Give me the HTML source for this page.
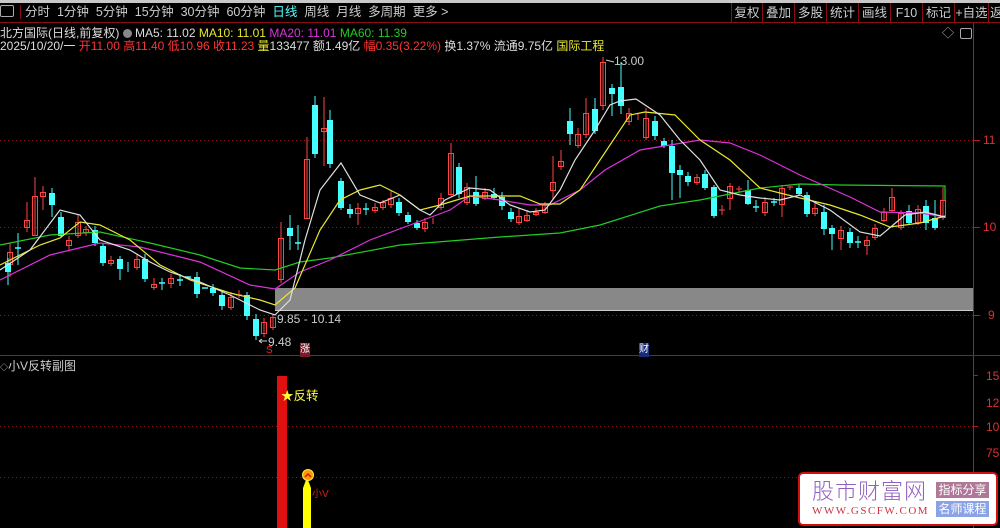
<!DOCTYPE html>
<html><head><meta charset="utf-8"><style>
body{margin:0;width:1000px;height:528px;background:#000;overflow:hidden;font-family:"Liberation Sans","Noto Sans CJK SC",sans-serif;position:relative}
.t{position:absolute;white-space:nowrap;font-size:12px;line-height:14px}
.b{position:absolute;top:6px;color:#ccc;font-size:12.5px;line-height:14px;text-align:center;white-space:nowrap}
</style></head><body>
<div style="position:absolute;left:0;top:0;width:1000px;height:3px;background:#c8c8c8"></div>
<div style="position:absolute;left:0;top:22px;width:1000px;height:1px;background:#8a0e14"></div>
<div class="t" style="left:0;top:5px;color:#ccc;font-size:12.5px;word-spacing:0">
<span style="display:inline-block;width:12px;height:10px;border:1px solid #aaa;border-radius:2px;vertical-align:-1px;margin-right:6px"></span><span style="border-left:1px solid #8a0e14;padding-left:4px">分时</span>&nbsp; 1分钟&nbsp; 5分钟&nbsp; 15分钟&nbsp; 30分钟&nbsp; 60分钟&nbsp; <span style="color:#5ff">日线</span>&nbsp; 周线&nbsp; 月线&nbsp; 多周期&nbsp; 更多 &gt;</div>
<div class="b" style="left:732px;width:30px">复权</div>
<div class="b" style="left:763px;width:31px">叠加</div>
<div class="b" style="left:795px;width:31px">多股</div>
<div class="b" style="left:827px;width:31px">统计</div>
<div class="b" style="left:859px;width:31px">画线</div>
<div class="b" style="left:891px;width:31px">F10</div>
<div class="b" style="left:923px;width:31px">标记</div>
<div class="b" style="left:955px;width:33px">+自选</div>
<div class="b" style="left:990px;width:20px;text-align:left">返</div>
<svg style="position:absolute;left:0;top:0" width="1000" height="528">
<g stroke="#8a0e14" stroke-width="1">
<line x1="731.5" y1="3" x2="731.5" y2="22"/><line x1="762.5" y1="3" x2="762.5" y2="22"/><line x1="794.5" y1="3" x2="794.5" y2="22"/><line x1="826.5" y1="3" x2="826.5" y2="22"/><line x1="858.5" y1="3" x2="858.5" y2="22"/><line x1="890.5" y1="3" x2="890.5" y2="22"/><line x1="922.5" y1="3" x2="922.5" y2="22"/><line x1="954.5" y1="3" x2="954.5" y2="22"/><line x1="988.5" y1="3" x2="988.5" y2="22"/>
</g>
<line x1="973.5" y1="23" x2="973.5" y2="528" stroke="#c0141c"/>
<line x1="0" y1="355.5" x2="1000" y2="355.5" stroke="#a0141c"/>
<g stroke="#8a1a1a" stroke-dasharray="1,3">
<line x1="0" y1="140.5" x2="973" y2="140.5"/><line x1="0" y1="227.5" x2="973" y2="227.5"/><line x1="0" y1="315.5" x2="973" y2="315.5"/>
<line x1="0" y1="426.5" x2="973" y2="426.5"/><line x1="0" y1="477.5" x2="973" y2="477.5"/>
</g>
<g stroke="#c0141c"><line x1="973" y1="140.5" x2="980" y2="140.5"/><line x1="973" y1="227.5" x2="980" y2="227.5"/><line x1="973" y1="315.5" x2="980" y2="315.5"/><line x1="973" y1="375.5" x2="978" y2="375.5"/><line x1="973" y1="426.5" x2="978" y2="426.5"/></g>
<rect x="275" y="288" width="698" height="22" fill="#888"/>
<line x1="275" y1="310.5" x2="973" y2="310.5" stroke="#ccc"/>
<g>
<g stroke="#ff4444" fill="none">
<path d="M10 243V277M27 202V232M35 177V235M43 186V210M69 236V250M78 214V238M86 226V236M111 256V266M137 254V270M154 278V290M171 274V288M231 292V310M239 290V298M264 318V337M273 314V330M281 222V283M307 137V218M324 97V166M358 203V225M375 203V213M383 200V210M391 190V208M425 218V232M433 218V224M441 193V210M451 143V196M467 183V205M485 188V200M519 208V225M527 210V222M536 208V216M545 202V214M553 156V200M561 150V170M578 128V148M586 98V138M603 57V110M629 108V125M638 113V120M646 108V140M697 174V185M722 205V215M730 183V210M739 186V192M765 197V216M782 185V217M790 186V190M815 203V216M841 226V250M867 236V255M875 224V240M884 208V222M892 188V212M901 210V230M918 205V225M943 187V220"/>
<path d="M7.5 252.5h5v12h-5zM24.5 220.5h5v7h-5zM32.5 196.5h5v39h-5zM40.5 192.5h5v4h-5zM66.5 240.5h5v5h-5zM75.5 222.5h5v13h-5zM83.5 229.5h5v3h-5zM108.5 260.5h5v3h-5zM134.5 259.5h5v8h-5zM151.5 284.5h5v3h-5zM168.5 278.5h5v5h-5zM228.5 297.5h5v10h-5zM261.5 322.5h5v11h-5zM270.5 317.5h5v10h-5zM278.5 238.5h5v41h-5zM304.5 159.5h5v59h-5zM321.5 128.5h5v3h-5zM355.5 208.5h5v5h-5zM372.5 207.5h5v3h-5zM380.5 202.5h5v5h-5zM388.5 198.5h5v6h-5zM422.5 222.5h5v6h-5zM438.5 198.5h5v9h-5zM448.5 153.5h5v41h-5zM464.5 187.5h5v15h-5zM482.5 192.5h5v6h-5zM516.5 216.5h5v6h-5zM524.5 215.5h5v5h-5zM533.5 212.5h5v2h-5zM542.5 205.5h5v7h-5zM550.5 182.5h5v8h-5zM558.5 161.5h5v5h-5zM575.5 134.5h5v11h-5zM583.5 113.5h5v21h-5zM600.5 62.5h5v43h-5zM626.5 113.5h5v8h-5zM643.5 118.5h5v19h-5zM694.5 177.5h5v5h-5zM727.5 186.5h5v12h-5zM762.5 202.5h5v10h-5zM779.5 188.5h5v16h-5zM812.5 208.5h5v5h-5zM838.5 230.5h5v8h-5zM864.5 240.5h5v5h-5zM872.5 228.5h5v9h-5zM881.5 212.5h5v8h-5zM889.5 197.5h5v13h-5zM898.5 213.5h5v14h-5zM915.5 209.5h5v13h-5zM940.5 200.5h5v17h-5z"/>
<path d="M719 210h6M236 295h6M736 189h6M787 187h6"/>
</g>
<g stroke="#44ffff" fill="#44ffff">
<path d="M8 258V285M18 233V265M52 188V217M61 212V238M95 226V246M103 244V266M120 256V280M128 262V272M145 254V282M162 278V290M180 274V286M197 272V298M213 284V296M222 290V310M247 292V320M256 314V340M290 215V250M298 225V250M315 96V158M330 110V168M341 178V210M350 204V218M366 203V215M399 198V216M408 212V224M417 220V230M459 163V198M476 176V206M494 188V200M502 192V210M511 208V222M570 108V145M595 98V134M612 84V116M621 62V114M655 116V140M664 138V148M672 140V200M680 165V198M688 172V186M705 170V190M714 185V218M748 180V205M756 200V212M774 198V206M799 184V196M807 192V217M824 205V235M832 225V250M850 228V248M858 236V248M909 205V225M926 200V230M935 200V230"/>
<path d="M5.5 263.5h5v8h-5zM49.5 193.5h5v11h-5zM58.5 217.5h5v18h-5zM92.5 230.5h5v12h-5zM100.5 246.5h5v16h-5zM117.5 259.5h5v9h-5zM142.5 259.5h5v19h-5zM194.5 277.5h5v16h-5zM210.5 288.5h5v4h-5zM219.5 295.5h5v10h-5zM244.5 295.5h5v20h-5zM253.5 319.5h5v16h-5zM287.5 228.5h5v7h-5zM312.5 105.5h5v48h-5zM327.5 120.5h5v43h-5zM338.5 181.5h5v26h-5zM347.5 209.5h5v4h-5zM396.5 202.5h5v10h-5zM405.5 215.5h5v6h-5zM414.5 223.5h5v4h-5zM456.5 167.5h5v26h-5zM473.5 192.5h5v11h-5zM491.5 194.5h5v3h-5zM499.5 197.5h5v8h-5zM508.5 212.5h5v6h-5zM567.5 121.5h5v12h-5zM592.5 109.5h5v21h-5zM609.5 88.5h5v5h-5zM618.5 87.5h5v18h-5zM652.5 121.5h5v14h-5zM661.5 141.5h5v4h-5zM669.5 146.5h5v26h-5zM677.5 170.5h5v4h-5zM685.5 176.5h5v5h-5zM702.5 174.5h5v13h-5zM711.5 187.5h5v28h-5zM745.5 190.5h5v13h-5zM796.5 188.5h5v5h-5zM804.5 195.5h5v18h-5zM821.5 212.5h5v16h-5zM829.5 228.5h5v5h-5zM847.5 232.5h5v10h-5zM906.5 211.5h5v11h-5zM923.5 206.5h5v16h-5zM932.5 218.5h5v9h-5z"/>
<path d="M15 248h6M159 283h6M177 280h6M185 277h6M202 288h6M295 243h6M363 209h6M753 207h6M771 202h6M855 242h6" stroke-width="1.5"/>
</g>
</g>
<g fill="none" stroke-width="1.2">
<polyline stroke="#22cc22" points="0,245 50,235 100,232 150,243 200,255 240,268 275,270 300,262 330,258 400,245 500,237 560,233 600,225 660,206 700,200 760,188 800,184 840,185 945,186 945,200"/>
<polyline stroke="#dd33dd" points="0,280 50,255 100,243 140,247 200,262 250,285 275,289 300,272 330,260 370,240 410,225 450,210 470,196 500,200 530,205 550,205 580,190 605,170 640,150 700,140 730,143 760,155 800,175 850,197 880,212 920,213 945,217"/>
<polyline stroke="#e8e830" points="0,265 40,245 60,238 80,222 100,225 130,240 160,265 190,280 230,293 260,300 275,305 295,288 320,230 340,200 360,190 380,185 400,195 420,210 440,205 470,196 490,196 520,196 540,204 560,204 580,190 600,160 630,115 645,112 675,115 700,140 730,160 760,188 800,198 830,205 860,215 890,227 920,223 945,216"/>
<polyline stroke="#e0e0e0" points="0,270 30,250 60,210 80,215 100,240 130,250 150,262 170,272 200,282 230,295 260,310 275,315 290,300 305,240 320,190 341,163 360,195 380,203 400,195 420,210 430,215 445,200 470,188 490,190 510,205 530,212 545,210 560,190 575,160 595,130 610,105 620,101 636,99 660,115 680,140 700,160 720,190 740,195 760,198 780,200 800,195 830,210 860,232 880,236 905,215 925,212 945,217"/>
</g>
<path d="M259 341h8M259 341l3-2M259 341l3 2M606 60l8 2" stroke="#ccc" fill="none"/>
<rect x="277" y="376" width="10" height="152" fill="#e01010"/>
<path d="M303 528V488l3-8v-8h2v8l3 8v40z" fill="#ffff00"/>
<circle cx="308" cy="475" r="5.5" fill="#ff9900" stroke="#ffee44"/>
<path d="M305 477l3-3 3 3" stroke="#cc2200" fill="none" stroke-width="1.5"/>
</svg>
<div class="t" style="left:0;top:26px;color:#ddd">北方国际(日线,前复权) <span style="display:inline-block;width:9px;height:9px;border-radius:50%;background:#888;vertical-align:-1px"></span> MA5: 11.02 <span style="color:#e8e830">MA10: 11.01</span> <span style="color:#dd33dd">MA20: 11.01</span> <span style="color:#22cc22">MA60: 11.39</span></div>
<div class="t" style="left:0;top:39px;color:#ddd">2025/10/20/一 <span style="color:#ff3333">开11.00 高11.40 低10.96 收11.23</span> <span style="color:#e8e830">量</span>133477 额1.49亿 <span style="color:#ff3333">幅0.35(3.22%)</span> 换1.37% 流通9.75亿 <span style="color:#e8e830">国际工程</span></div>
<div class="t" style="left:942px;top:26px;color:#aaa">◇</div>
<div style="position:absolute;left:960px;top:28px;width:10px;height:9px;border:1px solid #aaa;border-radius:2px"></div>
<div class="t" style="left:983px;top:133px;color:#e03030">11</div>
<div class="t" style="left:983px;top:220px;color:#e03030">10</div>
<div class="t" style="left:988px;top:308px;color:#e03030">9</div>
<div class="t" style="left:986px;top:369px;color:#e03030">15</div>
<div class="t" style="left:986px;top:396px;color:#e03030">12</div>
<div class="t" style="left:986px;top:420px;color:#e03030">10</div>
<div class="t" style="left:986px;top:446px;color:#e03030">75</div>
<div class="t" style="left:277px;top:312px;color:#ccc">9.85 - 10.14</div>
<div class="t" style="left:268px;top:335px;color:#ccc">9.48</div>
<div class="t" style="left:614px;top:54px;color:#ccc">13.00</div>
<div class="t" style="left:266px;top:344px;color:#ff2020;font-size:10px">S</div>
<div class="t" style="left:300px;top:343px;color:#fff;font-size:10px;background:#7a1a2a">涨</div>
<div class="t" style="left:639px;top:343px;color:#fff;font-size:10px;background:#1a2a7a">财</div>
<div class="t" style="left:0;top:359px;color:#ccc"><span style="font-size:8px">◇</span>小V反转副图</div>
<div class="t" style="left:281px;top:389px;color:#ffff30;font-size:12.5px">★反转</div>
<div class="t" style="left:312px;top:488px;color:#dd2020;font-size:10px">小V</div>
<div style="position:absolute;left:798px;top:472px;width:196px;height:50px;background:#fff;border:2px solid #d01010;border-radius:5px"></div>
<div class="t" style="left:812px;top:478px;font-size:22px;line-height:24px;color:#9060c0;letter-spacing:1px;font-family:'Noto Sans CJK SC',sans-serif;font-weight:300">股市财富网</div>
<div class="t" style="left:812px;top:504px;font-size:11px;color:#d03040;font-family:'Liberation Serif',serif;letter-spacing:1.5px">WWW.GSCFW.COM</div>
<div class="t" style="left:936px;top:482px;width:53px;height:16px;background:#b07898;color:#fff;font-size:12px;text-align:center;line-height:16px">指标分享</div>
<div class="t" style="left:936px;top:501px;width:53px;height:16px;background:#8aa2e6;color:#fff;font-size:12px;text-align:center;line-height:16px">名师课程</div>
</body></html>
